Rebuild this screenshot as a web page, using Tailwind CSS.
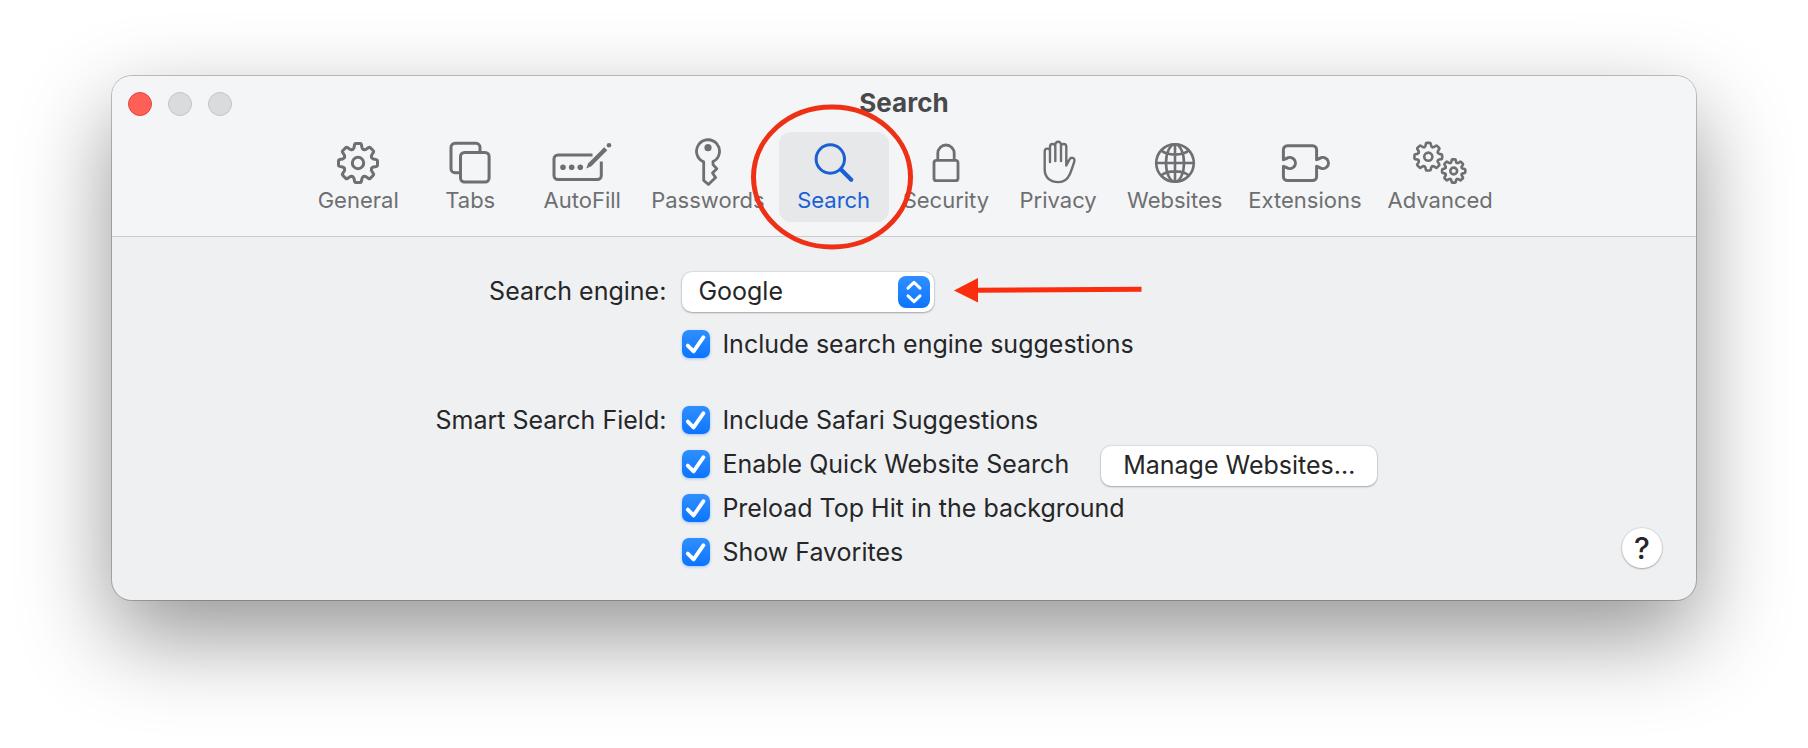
<!DOCTYPE html>
<html lang="en">
<head>
  <meta charset="UTF-8" />
  <meta name="viewport" content="width=device-width, initial-scale=1.0" />
  <title>Search</title>
  <script src="https://cdn.jsdelivr.net/npm/@tailwindcss/browser@4"></script>
</head>
<body class="bg-white px-28 pt-19 pb-36 font-['Inter',sans-serif] text-[#262628]">

  <!-- Shared shapes -->
  <svg class="hidden">
    <defs>
      <path id="tooth" vector-effect="non-scaling-stroke" d="M-5.6 -13.5Q-4.3 -14.2 -4 -15.4L-3.4 -18.4Q-3.2 -19.5 -2.2 -19.5H2.2Q3.2 -19.5 3.4 -18.4L4 -15.4Q4.3 -14.2 5.6 -13.5" />
      <g id="gear">
        <use href="#tooth" />
        <use href="#tooth" transform="rotate(45)" />
        <use href="#tooth" transform="rotate(90)" />
        <use href="#tooth" transform="rotate(135)" />
        <use href="#tooth" transform="rotate(180)" />
        <use href="#tooth" transform="rotate(225)" />
        <use href="#tooth" transform="rotate(270)" />
        <use href="#tooth" transform="rotate(315)" />
        <circle r="5.7" vector-effect="non-scaling-stroke" />
      </g>
      <path id="check" d="M5.8 15.6L11.6 21.4L21.5 7.2" />
    </defs>
  </svg>

  <main class="rounded-[20px] bg-[#eff0f2] shadow-[0_0_0_1px_rgba(0,0,0,0.22),0_36px_90px_rgba(0,0,0,0.42)]">

    <!-- Title bar and toolbar -->
    <header class="rounded-t-[20px] border-b border-[#c9cacc] bg-[#f4f5f7] pb-3.5">
      <div class="grid h-14 grid-cols-3 items-center px-4">
        <div class="flex gap-4">
          <button aria-label="Close" class="size-6 rounded-full border border-[#e2463f] bg-[#fe5f57]"></button>
          <button aria-label="Minimize" class="size-6 rounded-full border border-[#c3c4c6] bg-[#dadbdd]"></button>
          <button aria-label="Zoom" class="size-6 rounded-full border border-[#c3c4c6] bg-[#dadbdd]"></button>
        </div>
        <h1 class="pb-0.5 text-center text-[26px] leading-8 font-bold text-[#48494b]">Search</h1>
      </div>

      <nav class="flex justify-center gap-0.5 text-[22px] leading-7 text-[#6e6f71]">
        <button class="flex min-w-[110px] flex-col items-center rounded-xl px-3 pt-1.5 pb-2">
          <svg class="h-12 w-12" viewBox="0 0 48 48" fill="none" stroke="currentColor" stroke-width="3" stroke-linecap="round">
            <use href="#gear" transform="translate(24 25)" />
          </svg>
          General
        </button>
        <button class="flex min-w-[110px] flex-col items-center rounded-xl px-3 pt-1.5 pb-2">
          <svg class="h-12 w-12" viewBox="0 0 48 48" fill="none" stroke="currentColor" stroke-width="3">
            <path d="M14.5 34.7H9a4 4 0 0 1-4-4V9.3a4 4 0 0 1 4-4H30a4 4 0 0 1 4 4V14.4" />
            <rect x="14.5" y="14.4" width="28.6" height="29.6" rx="4" />
          </svg>
          Tabs
        </button>
        <button class="flex min-w-[110px] flex-col items-center rounded-xl px-3 pt-1.5 pb-2">
          <svg class="h-12 w-[60px]" viewBox="0 0 60 48" fill="none" stroke="currentColor" stroke-width="3">
            <path d="M40.5 17H6a4 4 0 0 0-4 4V37.6a4 4 0 0 0 4 4H45.3a4 4 0 0 0 4-4V23.5" />
            <g fill="currentColor" stroke="none">
              <circle cx="11" cy="29.3" r="2.8" />
              <circle cx="19.7" cy="29.3" r="2.8" />
              <circle cx="28.3" cy="29.3" r="2.8" />
              <path d="M34.2 30.5L36.3 25.2L52.2 9.2L55.3 12.2L39.4 28.2Z" />
              <circle cx="57" cy="7.2" r="2.3" />
            </g>
          </svg>
          AutoFill
        </button>
        <button class="flex min-w-[110px] flex-col items-center rounded-xl px-3 pt-1.5 pb-2">
          <svg class="h-12 w-8" viewBox="0 0 32 48" fill="none" stroke="currentColor" stroke-width="2.8" stroke-linejoin="round">
            <path d="M11.7 23.9A11.5 11.5 0 1 1 21 23.6V26.6L24.8 30.8L20.5 35L23.6 39.6L16.4 46.4L11.7 42.5Z" />
            <circle cx="16" cy="9.7" r="3.6" fill="currentColor" stroke="none" />
          </svg>
          Passwords
        </button>
        <button class="relative flex min-w-[110px] flex-col items-center rounded-xl bg-[#e6e8ea] px-3 pt-1.5 pb-2 text-[#1a5fd6]" aria-current="page">
          <svg class="h-12 w-12" viewBox="0 0 48 48" fill="none" stroke="currentColor" stroke-width="3">
            <circle cx="20.3" cy="21" r="14.2" />
            <path d="M31 31.6L41.2 41.8" stroke-width="4.2" stroke-linecap="round" />
          </svg>
          Search
          <!-- Hand-drawn ring over the selected tab -->
          <svg class="pointer-events-none absolute -top-7 -left-7 z-10 h-[146px] w-[162px]" viewBox="0 0 162 146" fill="none" stroke="#ee3116" stroke-width="5">
            <ellipse cx="81" cy="73" rx="78.5" ry="70" />
          </svg>
        </button>
        <button class="flex min-w-[110px] flex-col items-center rounded-xl px-3 pt-1.5 pb-2">
          <svg class="h-12 w-8" viewBox="0 0 32 48" fill="none" stroke="currentColor" stroke-width="2.8">
            <rect x="4" y="22.3" width="24" height="20.4" rx="2.5" />
            <path d="M7.8 22V15.2a8.2 8.2 0 0 1 16.4 0V22" />
          </svg>
          Security
        </button>
        <button class="flex min-w-[110px] flex-col items-center rounded-xl px-3 pt-1.5 pb-2">
          <svg class="h-12 w-9" viewBox="0 0 36 48" fill="none" stroke="currentColor" stroke-width="2.4" stroke-linejoin="round" stroke-linecap="round">
            <path d="M10 24V13.3a2.65 2.65 0 0 0-5.3 0V31.5c0 8 5.5 12.6 14 12.6c5.4 0 8.7-2.9 11-7.7c1.9-4 3-7.7 4.5-12.5c.6-1.8 .3-3.5-1.7-4c-1.6-.4-2.6 .6-3.6 2.6L26.3 27.5V8.6a2.65 2.65 0 0 0-5.3 0V23V6.6a2.85 2.85 0 0 0-5.7 0V23V8.6a2.65 2.65 0 0 0-5.3 0V14" />
          </svg>
          Privacy
        </button>
        <button class="flex min-w-[110px] flex-col items-center rounded-xl px-3 pt-1.5 pb-2">
          <svg class="h-12 w-12" viewBox="0 0 48 48" fill="none" stroke="currentColor" stroke-width="2.6">
            <circle cx="24" cy="25" r="18.8" />
            <ellipse cx="24" cy="25" rx="9" ry="18.8" />
            <path d="M24 6.2V43.8M5.2 25H42.8M10.2 12.6Q15 16.6 24 16.6T37.8 12.6M10.2 37.4Q15 33.4 24 33.4T37.8 37.4" />
          </svg>
          Websites
        </button>
        <button class="flex min-w-[110px] flex-col items-center rounded-xl px-3 pt-1.5 pb-2">
          <svg class="h-12 w-[52px]" viewBox="0 0 52 48" fill="none" stroke="currentColor" stroke-width="3" stroke-linejoin="round">
            <path d="M8.4 7.7H33.6a4 4 0 0 1 4 4V21.7L40.5 20.5a5.6 5.6 0 1 1 0 9L37.6 28.3V38.6a4 4 0 0 1-4 4H8.4a4 4 0 0 1-4-4V28.3L7.5 29.5a5.6 5.6 0 1 0 0-9L4.4 21.7V11.7a4 4 0 0 1 4-4Z" />
          </svg>
          Extensions
        </button>
        <button class="flex min-w-[110px] flex-col items-center rounded-xl px-3 pt-1.5 pb-2">
          <svg class="h-12 w-14" viewBox="0 0 56 48" fill="none" stroke="currentColor" stroke-width="2.6" stroke-linecap="round">
            <use href="#gear" transform="translate(16.3 18.7) scale(.71)" />
            <use href="#gear" transform="translate(41.7 33) scale(.595)" />
          </svg>
          Advanced
        </button>
      </nav>
    </header>

    <!-- Settings -->
    <section class="grid grid-cols-[35%_1fr_auto] gap-x-4 pt-[35px] pb-[26px] text-[25px] leading-8">
      <label for="engine" class="flex h-10 items-center justify-end pb-0.5">Search engine:</label>
      <div class="flex items-center gap-5">
        <div class="grid w-[252px] items-center">
          <select id="engine" class="col-start-1 row-start-1 h-10 appearance-none rounded-[10px] bg-white pb-0.5 pl-4 shadow-[0_0_1px_1px_rgba(0,0,0,0.08),0_1px_2px_rgba(0,0,0,0.25)]">
            <option>Google</option>
            <option>Yahoo</option>
            <option>Bing</option>
            <option>DuckDuckGo</option>
            <option>Ecosia</option>
          </select>
          <svg class="pointer-events-none col-start-1 row-start-1 mr-1 size-8 justify-self-end rounded-lg bg-linear-to-b from-[#2f8fff] to-[#0a74fd]" viewBox="0 0 32 32" fill="none" stroke="white" stroke-width="3" stroke-linecap="round" stroke-linejoin="round">
            <path d="M10 12.2L16 6.4L22 12.2M10 19.8L16 25.6L22 19.8" />
          </svg>
        </div>
        <!-- Arrow pointing at the drop-down -->
        <svg class="h-7 w-[188px]" viewBox="0 0 188 28">
          <path d="M22 12.2L187.5 11.2" stroke="#fa2e0e" stroke-width="5" />
          <path d="M0 12.4L24 0V24.5Z" fill="#fa2e0e" />
        </svg>
      </div>

      <label class="col-start-2 mt-2.5 flex h-11 items-center gap-3">
        <span class="grid">
          <input type="checkbox" checked class="col-start-1 row-start-1 size-7 appearance-none rounded-[7px] bg-linear-to-b from-[#2f8fff] to-[#0a74fd] shadow-[0_1px_3px_rgba(10,116,253,0.35)]" />
          <svg class="pointer-events-none col-start-1 row-start-1 size-7" viewBox="0 0 28 28" fill="none" stroke="white" stroke-width="3.8" stroke-linecap="round" stroke-linejoin="round"><use href="#check" /></svg>
        </span>
        Include search engine suggestions
      </label>

      <div id="smart-field" class="col-start-1 mt-8 flex h-11 items-center justify-end">Smart Search Field:</div>
      <div role="group" aria-labelledby="smart-field" class="mt-8">
        <label class="flex h-11 items-center gap-3">
          <span class="grid">
            <input type="checkbox" checked class="col-start-1 row-start-1 size-7 appearance-none rounded-[7px] bg-linear-to-b from-[#2f8fff] to-[#0a74fd] shadow-[0_1px_3px_rgba(10,116,253,0.35)]" />
            <svg class="pointer-events-none col-start-1 row-start-1 size-7" viewBox="0 0 28 28" fill="none" stroke="white" stroke-width="3.8" stroke-linecap="round" stroke-linejoin="round"><use href="#check" /></svg>
          </span>
          Include Safari Suggestions
        </label>
        <div class="flex h-11 items-end gap-8">
          <label class="flex h-11 items-center gap-3">
            <span class="grid">
              <input type="checkbox" checked class="col-start-1 row-start-1 size-7 appearance-none rounded-[7px] bg-linear-to-b from-[#2f8fff] to-[#0a74fd] shadow-[0_1px_3px_rgba(10,116,253,0.35)]" />
              <svg class="pointer-events-none col-start-1 row-start-1 size-7" viewBox="0 0 28 28" fill="none" stroke="white" stroke-width="3.8" stroke-linecap="round" stroke-linejoin="round"><use href="#check" /></svg>
            </span>
            Enable Quick Website Search
          </label>
          <button class="h-10 rounded-[10px] bg-white px-[22px] pb-0.5 shadow-[0_0_1px_1px_rgba(0,0,0,0.08),0_1px_2px_rgba(0,0,0,0.25)]">Manage Websites…</button>
        </div>
        <label class="flex h-11 items-center gap-3">
          <span class="grid">
            <input type="checkbox" checked class="col-start-1 row-start-1 size-7 appearance-none rounded-[7px] bg-linear-to-b from-[#2f8fff] to-[#0a74fd] shadow-[0_1px_3px_rgba(10,116,253,0.35)]" />
            <svg class="pointer-events-none col-start-1 row-start-1 size-7" viewBox="0 0 28 28" fill="none" stroke="white" stroke-width="3.8" stroke-linecap="round" stroke-linejoin="round"><use href="#check" /></svg>
          </span>
          Preload Top Hit in the background
        </label>
        <label class="flex h-11 items-center gap-3">
          <span class="grid">
            <input type="checkbox" checked class="col-start-1 row-start-1 size-7 appearance-none rounded-[7px] bg-linear-to-b from-[#2f8fff] to-[#0a74fd] shadow-[0_1px_3px_rgba(10,116,253,0.35)]" />
            <svg class="pointer-events-none col-start-1 row-start-1 size-7" viewBox="0 0 28 28" fill="none" stroke="white" stroke-width="3.8" stroke-linecap="round" stroke-linejoin="round"><use href="#check" /></svg>
          </span>
          Show Favorites
        </label>
      </div>
      <button aria-label="Help" class="mr-[34px] mb-1.5 size-10 self-end rounded-full bg-white text-[30px] font-medium shadow-[0_0_1px_1px_rgba(0,0,0,0.08),0_1px_2px_rgba(0,0,0,0.25)]">?</button>
    </section>
  </main>

</body>
</html>
